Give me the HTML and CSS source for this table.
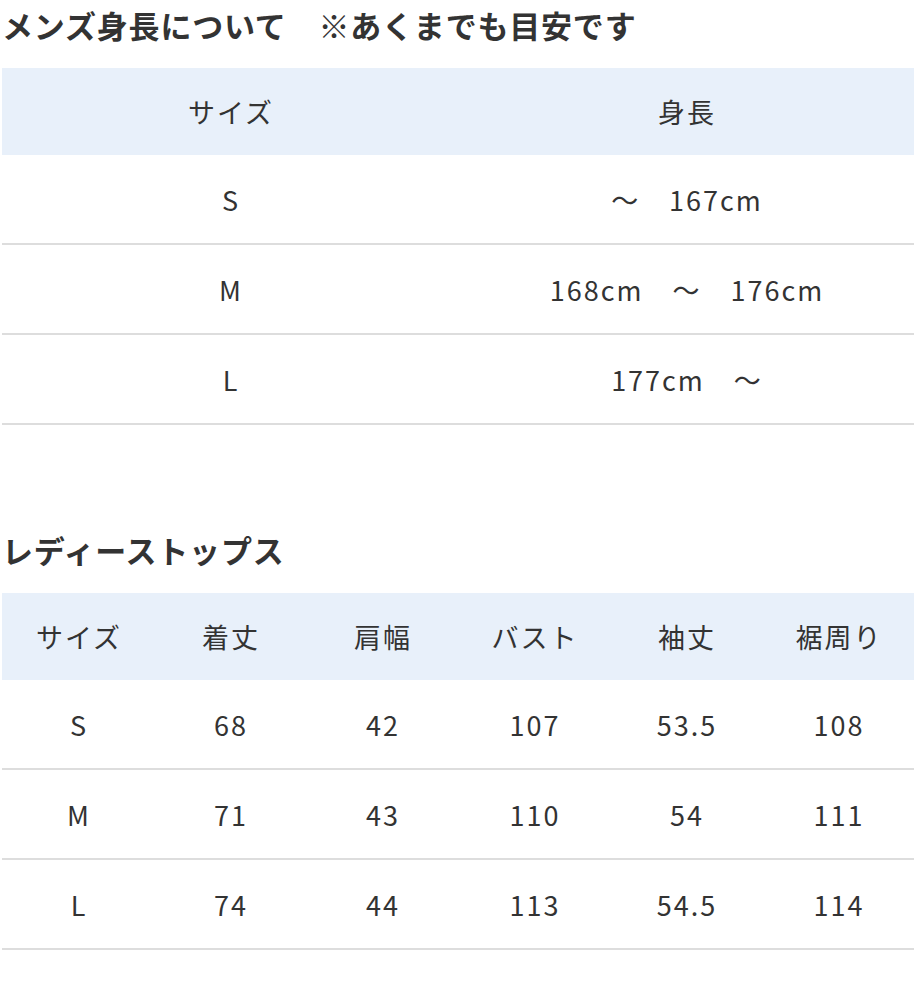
FILE: index.html
```html
<!DOCTYPE html>
<html lang="ja">
<head>
<meta charset="utf-8">
<title>サイズ表</title>
<link rel="stylesheet" href="styles.css">
</head>
<body>
<div class="wrap">
  <section class="section">
    <h2 class="title">メンズ身長について　※あくまでも目安です</h2>
    <table class="size-table two">
      <thead>
        <tr><th>サイズ</th><th>身長</th></tr>
      </thead>
      <tbody>
        <tr><td>S</td><td>～　167cm</td></tr>
        <tr><td>M</td><td>168cm　～　176cm</td></tr>
        <tr><td>L</td><td>177cm　～</td></tr>
      </tbody>
    </table>
  </section>
  <section class="section second">
    <h2 class="title">レディーストップス</h2>
    <table class="size-table six">
      <thead>
        <tr><th>サイズ</th><th>着丈</th><th>肩幅</th><th>バスト</th><th>袖丈</th><th>裾周り</th></tr>
      </thead>
      <tbody>
        <tr><td>S</td><td>68</td><td>42</td><td>107</td><td>53.5</td><td>108</td></tr>
        <tr><td>M</td><td>71</td><td>43</td><td>110</td><td>54</td><td>111</td></tr>
        <tr><td>L</td><td>74</td><td>44</td><td>113</td><td>54.5</td><td>114</td></tr>
      </tbody>
    </table>
  </section>
</div>
</body>
</html>
```
FILE: styles.css
```css
html, body {
  margin: 0;
  padding: 0;
  background: #ffffff;
}
body {
  font-family: "Noto Sans CJK JP", "Noto Sans", sans-serif;
  color: #333333;
}
.wrap {
  width: 912px;
  padding-left: 2px;
}
.title {
  margin: 0;
  padding-top: 2px;
  font-size: 31px;
  font-weight: 700;
  letter-spacing: 0.8px;
  line-height: 45px;
  color: #333333;
}
.second {
  margin-top: 100px;
}
.size-table {
  width: 912px;
  margin-top: 21px;
  border-collapse: collapse;
  table-layout: fixed;
}
.size-table th,
.size-table td {
  padding: 0 0 0 2px;
  text-align: center;
  font-size: 27px;
  font-weight: 400;
  letter-spacing: 2px;
  color: #333333;
}
.size-table th {
  height: 87px;
  background: #e8f0fa;
}
.size-table td {
  height: 88px;
  border-bottom: 2px solid #dddddd;
}
```
